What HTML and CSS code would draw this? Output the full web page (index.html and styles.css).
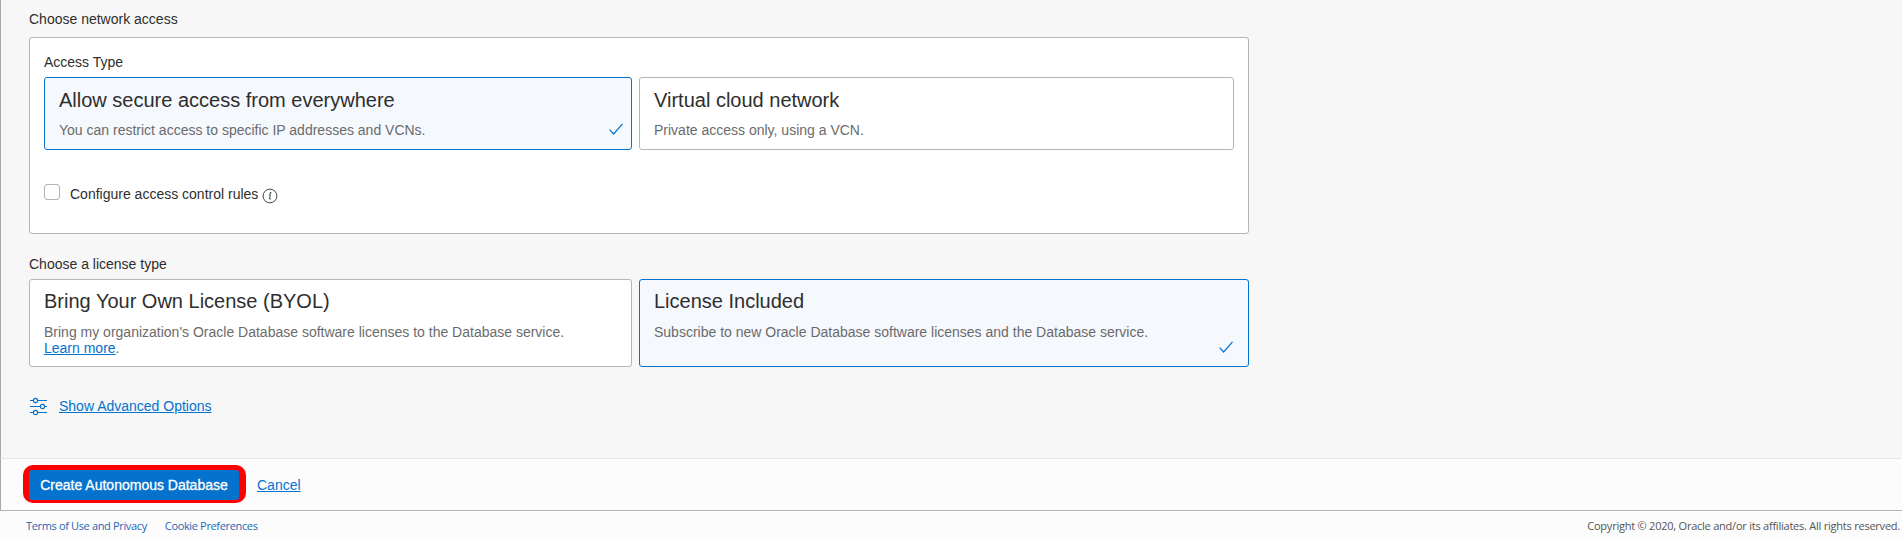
FILE: index.html
```html
<!DOCTYPE html>
<html lang="en">
<head>
<meta charset="utf-8">
<title>Create Autonomous Database</title>
<link rel="stylesheet" href="styles.css">
</head>
<body>
<main class="form">
  <h2 class="label section-label">Choose network access</h2>
  <section class="panel">
    <h3 class="label">Access Type</h3>
    <div class="cards access-cards">
      <div class="card selected">
        <div class="card-title">Allow secure access from everywhere</div>
        <p class="card-text">You can restrict access to specific IP addresses and VCNs.</p>
        <svg class="check" viewBox="0 0 14 12"><path d="M.6 6.7 4.6 11 13.5.8"/></svg>
      </div>
      <div class="card">
        <div class="card-title">Virtual cloud network</div>
        <p class="card-text">Private access only, using a VCN.</p>
      </div>
    </div>
    <div class="option">
      <span class="checkbox"></span>
      <span class="label option-label">Configure access control rules</span>
      <svg class="info" viewBox="0 0 16 16"><circle cx="8" cy="8" r="6.9"/><path class="stem" d="M6.8 6.9H8.3L7.5 11H8.9"/><circle class="dot" cx="8.5" cy="5" r=".9"/></svg>
    </div>
  </section>
  <h2 class="label license-label">Choose a license type</h2>
  <div class="cards license-cards">
    <div class="card">
      <div class="card-title">Bring Your Own License (BYOL)</div>
      <p class="card-text">Bring my organization's Oracle Database software licenses to the Database service.<br><a class="link" href="#">Learn more</a>.</p>
    </div>
    <div class="card selected">
      <div class="card-title">License Included</div>
      <p class="card-text">Subscribe to new Oracle Database software licenses and the Database service.</p>
      <svg class="check" viewBox="0 0 14 12"><path d="M.6 6.7 4.6 11 13.5.8"/></svg>
    </div>
  </div>
  <div class="advanced">
    <svg class="sliders" viewBox="0 0 18 18"><path d="M0 3.5H3M8 3.5H17M0 9.5H10M15 9.5H17M0 15.5H3M8 15.5H17"/><circle cx="5.5" cy="3.5" r="2.1"/><circle cx="12.5" cy="9.5" r="2.1"/><circle cx="5.5" cy="15.5" r="2.1"/></svg>
    <a class="link" href="#">Show Advanced Options</a>
  </div>
</main>
<div class="actions">
  <div class="highlight"><button class="primary">Create Autonomous Database</button></div>
  <a class="link" href="#">Cancel</a>
</div>
<footer class="footer">
  <nav class="footer-links"><a class="terms" href="#">Terms of Use and Privacy</a><a class="cookies" href="#">Cookie Preferences</a></nav>
  <span class="copyright">Copyright © 2020, Oracle and/or its affiliates. All rights reserved.</span>
</footer>
</body>
</html>
```
FILE: styles.css
```css
* { box-sizing: border-box; }
body {
  margin: 0;
  height: 539px;
  display: flex;
  flex-direction: column;
  overflow: hidden;
  background: #fcfcfc;
  color: #2e2e2e;
  font: 14px/16px "Liberation Sans", Arial, sans-serif;
}
.form {
  height: 458px;
  padding: 11px 0 0 28px;
  background: #f7f7f7;
  border-left: 1px solid #a8a8a8;
}
.label { margin: 0; font-size: 14px; font-weight: 400; line-height: 16px; }
.panel {
  width: 1220px;
  height: 197px;
  margin-top: 10px;
  padding: 16px 14px 0;
  background: #fff;
  border: 1px solid #b1b5be;
  border-radius: 3px;
}
.cards { display: grid; gap: 7px; }
.access-cards { grid-template-columns: 588px 595px; height: 73px; margin-top: 7px; }
.license-cards { grid-template-columns: 603px 610px; height: 88px; margin-top: 7px; }
.card {
  position: relative;
  padding: 11px 14px 0;
  background: #fff;
  border: 1px solid #b1b5be;
  border-radius: 3px;
}
.license-cards .card { padding-top: 10px; }
.selected { background: #f5f8fd; border-color: #0572ce; }
.card-title { font-size: 20px; line-height: 23px; }
.card-text { margin: 10px 0 0; color: #6b6b6b; line-height: 16px; }
.license-cards .card-text { margin-top: 11px; }
.check {
  position: absolute;
  right: 8px;
  bottom: 14px;
  width: 14px;
  height: 12px;
  fill: none;
  stroke: #0572ce;
  stroke-width: 1.2;
}
.license-cards .check { right: 15px; bottom: 13px; }
.option { display: flex; margin-top: 34px; }
.checkbox { width: 16px; height: 16px; border: 1px solid #b1b5be; border-radius: 3px; background: #fff; }
.option-label { margin: 2px 4px 0 10px; }
.info { width: 16px; height: 16px; margin-top: 4px; fill: none; stroke: #444; stroke-width: 1; }
.info .dot { fill: #444; stroke: none; }
.license-label { margin-top: 22px; }
.link { color: #0572ce; text-decoration: underline; }
.advanced { display: flex; margin-top: 30px; }
.advanced .link { margin-top: 1px; }
.sliders { width: 18px; height: 18px; margin: 0 11px 0 1px; fill: none; stroke: #0572ce; stroke-width: 1.1; }
.actions {
  display: flex;
  align-items: flex-start;
  height: 53px;
  padding: 6px 0 0 22px;
  border: solid #b1b5be;
  border-width: 1px 0 1px 1px;
  border-top-color: #e4e4e4;
  border-left-color: #a8a8a8;
}
.highlight { width: 223px; height: 38px; padding: 5px 6px 3px; background: #f00; border-radius: 10px; }
.primary {
  width: 210px;
  height: 30px;
  padding: 0;
  background: #0572ce;
  color: #fff;
  border: 0;
  border-radius: 3px;
  font: 14px/16px "Liberation Sans", Arial, sans-serif;
  -webkit-text-stroke: .3px #fff;
}
.actions .link { margin: 12px 0 0 11px; }
.footer {
  display: flex;
  justify-content: space-between;
  height: 28px;
  padding: 7px 2px 0 26px;
  font: 11px/16px "Open Sans", sans-serif;
}
.footer-links { display: flex; gap: 18px; letter-spacing: -.35px; }
.footer-links a { color: #1b68b5; text-decoration: none; }
.copyright { color: #555; letter-spacing: -.23px; }
```
